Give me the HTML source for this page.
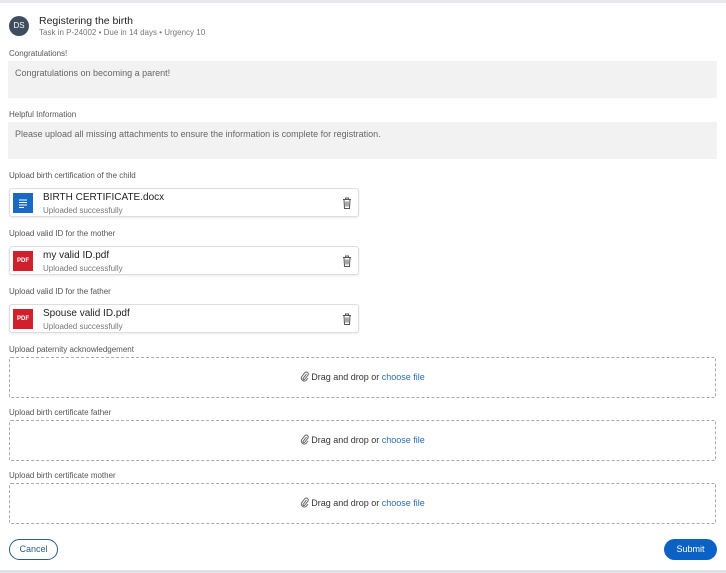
<!DOCTYPE html>
<html><head><style>
*{box-sizing:border-box;margin:0;padding:0}
body{width:726px;height:573px;background:#fff;font-family:"Liberation Sans",sans-serif;position:relative;overflow:hidden;color:#333}
.top{position:absolute;left:0;top:0;width:726px;height:3px;background:#e6e8ec}
.bot{position:absolute;left:0;top:570px;width:726px;height:3px;background:#e0e2e6}
.a{position:absolute}
.av{left:9px;top:16px;width:20px;height:20px;border-radius:50%;background:#3f4d5e;color:#fff;font-size:8px;line-height:20px;text-align:center}
.lbl{font-size:8px;color:#555;left:9px}
.box{left:8px;width:709px;background:#f2f2f2;font-size:9px;color:#666;padding:7px 7px}
.card{left:9px;width:350px;height:29px;border:1px solid #ddd;border-radius:3px;box-shadow:0 1px 2px rgba(0,0,0,.08)}
.ic{position:absolute;left:3px;top:4px;width:20px;height:20px;color:#fff;font-size:6px;font-weight:bold;text-align:center;line-height:20px}
.fn{position:absolute;left:33px;top:3px;font-size:10px;color:#222}
.st{position:absolute;left:33px;top:17px;font-size:8px;color:#777}
.tr{position:absolute;right:6px;top:8px}
.dz{left:9px;width:707px;height:41px;border:1px dashed #aaa;border-radius:2px;font-size:9px;text-align:center;line-height:39px;color:#333}
.dz span{color:#2a6db0}
.dz svg{vertical-align:-2px;margin-right:2px}
.btn{top:539px;height:21px;border-radius:11px;font-size:9px;text-align:center;line-height:19px}
</style></head><body>
<div class="top"></div><div class="bot"></div>
<div class="a av">DS</div>
<div class="a" style="left:39px;top:15px;font-size:10.5px;color:#222">Registering the birth</div>
<div class="a" style="left:39px;top:28px;font-size:8px;color:#777">Task in P-24002 • Due in 14 days • Urgency 10</div>
<div class="a lbl" style="top:49px">Congratulations!</div>
<div class="a box" style="top:61px;height:37px">Congratulations on becoming a parent!</div>
<div class="a lbl" style="top:110px">Helpful Information</div>
<div class="a box" style="top:122px;height:37px">Please upload all missing attachments to ensure the information is complete for registration.</div>

<div class="a lbl" style="top:171px">Upload birth certification of the child</div>
<div class="a card" style="top:188px"><div class="ic" style="background:#1a6ac4"><svg width="20" height="20"><g stroke="#fff" stroke-width="1"><path d="M6 7h8M6 9.5h8M6 12h8M6 14.5h5"/></g></svg></div><div class="fn">BIRTH CERTIFICATE.docx</div><div class="st">Uploaded successfully</div>
<svg class="tr" width="10" height="12" viewBox="0 0 10 12"><path d="M1 2.5h8M3.5 2.5V1h3v1.5M2 2.5l.5 9h5l.5-9M4 4.5v5M6 4.5v5" fill="none" stroke="#555" stroke-width="1"/></svg></div>

<div class="a lbl" style="top:229px">Upload valid ID for the mother</div>
<div class="a card" style="top:246px"><div class="ic" style="background:#d0202e">PDF</div><div class="fn">my valid ID.pdf</div><div class="st">Uploaded successfully</div>
<svg class="tr" width="10" height="12" viewBox="0 0 10 12"><path d="M1 2.5h8M3.5 2.5V1h3v1.5M2 2.5l.5 9h5l.5-9M4 4.5v5M6 4.5v5" fill="none" stroke="#555" stroke-width="1"/></svg></div>

<div class="a lbl" style="top:287px">Upload valid ID for the father</div>
<div class="a card" style="top:304px"><div class="ic" style="background:#d0202e">PDF</div><div class="fn">Spouse valid ID.pdf</div><div class="st">Uploaded successfully</div>
<svg class="tr" width="10" height="12" viewBox="0 0 10 12"><path d="M1 2.5h8M3.5 2.5V1h3v1.5M2 2.5l.5 9h5l.5-9M4 4.5v5M6 4.5v5" fill="none" stroke="#555" stroke-width="1"/></svg></div>

<div class="a lbl" style="top:345px">Upload paternity acknowledgement</div>
<div class="a dz" style="top:357px"><svg width="9" height="11" viewBox="0 0 9 11"><path d="M6.5 3L3 7.5a1 1 0 0 0 1.5 1L8 4a2 2 0 0 0-3-2.5L1.5 6a3 3 0 0 0 4.5 3.5L8 7" fill="none" stroke="#666" stroke-width="1"/></svg>Drag and drop or <span>choose file</span></div>
<div class="a lbl" style="top:408px">Upload birth certificate father</div>
<div class="a dz" style="top:420px"><svg width="9" height="11" viewBox="0 0 9 11"><path d="M6.5 3L3 7.5a1 1 0 0 0 1.5 1L8 4a2 2 0 0 0-3-2.5L1.5 6a3 3 0 0 0 4.5 3.5L8 7" fill="none" stroke="#666" stroke-width="1"/></svg>Drag and drop or <span>choose file</span></div>
<div class="a lbl" style="top:471px">Upload birth certificate mother</div>
<div class="a dz" style="top:483px"><svg width="9" height="11" viewBox="0 0 9 11"><path d="M6.5 3L3 7.5a1 1 0 0 0 1.5 1L8 4a2 2 0 0 0-3-2.5L1.5 6a3 3 0 0 0 4.5 3.5L8 7" fill="none" stroke="#666" stroke-width="1"/></svg>Drag and drop or <span>choose file</span></div>

<div class="a btn" style="left:9px;width:49px;border:1px solid #2a5d8a;color:#2a5d8a">Cancel</div>
<div class="a btn" style="left:664px;width:53px;background:#0b62c4;color:#fff;line-height:21px">Submit</div>
</body></html>
